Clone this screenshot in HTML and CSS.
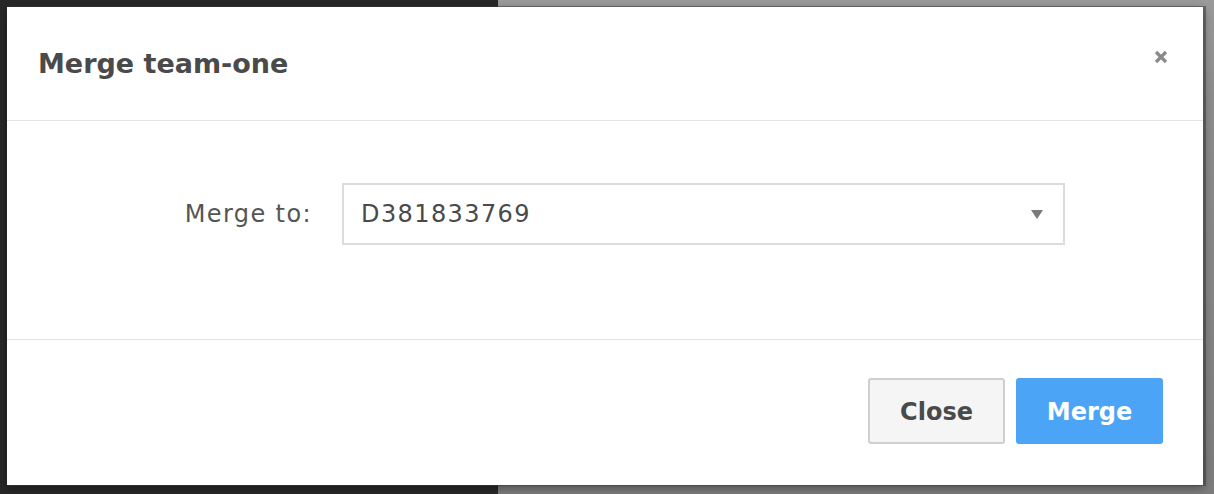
FILE: index.html
```html
<!DOCTYPE html>
<html>
<head>
<meta charset="utf-8">
<link rel="stylesheet" href="styles.css">
</head>
<body>
<div class="backdrop">
  <div class="side"></div>
  <div class="main"></div>
</div>
<div class="modal">
  <div class="modal-header">
    <h2 class="modal-title">Merge team-one</h2>
    <button class="close-x" aria-label="Close">
      <svg width="14" height="14" viewBox="0 0 14 14"><path d="M2 2 L12 12 M12 2 L2 12" stroke="#8a8a8a" stroke-width="3.2" stroke-linecap="butt"/></svg>
    </button>
  </div>
  <div class="modal-body">
    <label class="field-label">Merge to:</label>
    <div class="select">
      <span class="select-value">D381833769</span>
      <svg class="caret" width="12" height="9" viewBox="0 0 12 9"><path d="M0 0 H12 L6 9 Z" fill="#7a7a7a"/></svg>
    </div>
  </div>
  <div class="modal-footer">
    <button class="btn btn-default">Close</button>
    <button class="btn btn-primary">Merge</button>
  </div>
</div>
</body>
</html>
```

FILE: styles.css
```css
html, body {
  margin: 0;
  padding: 0;
  width: 1214px;
  height: 494px;
  overflow: hidden;
  font-family: "DejaVu Sans", Inter, sans-serif;
}
.backdrop {
  display: flex;
  width: 1214px;
  height: 494px;
}
.side {
  width: 498px;
  background: #282828;
}
.main {
  flex: 1;
  background: linear-gradient(180deg, #9a9a9a 0, #8c8c8c 20%, #858585 60%, #7c7c7c 100%);
}
.modal {
  position: absolute;
  left: 7px;
  top: 7px;
  width: 1196px;
  height: 478px;
  background: #fff;
  box-shadow: 2px 0 0 1px rgba(60,60,60,0.55), 0 3px 9px rgba(0,0,0,0.4);
  display: flex;
  flex-direction: column;
}
.modal-header {
  height: 113px;
  border-bottom: 1px solid #e3e3e3;
  display: flex;
  align-items: center;
  justify-content: space-between;
  padding: 0 35px 0 31px;
}
.modal-title {
  margin: 0;
  font-size: 27px;
  font-weight: 700;
  color: #4a4a4a;
}
.close-x {
  border: 0;
  background: none;
  padding: 0;
  width: 14px;
  height: 14px;
  margin-top: -14px;
  cursor: pointer;
  display: flex;
}
.modal-body {
  box-sizing: border-box;
  height: 219px;
  border-bottom: 1px solid #e3e3e3;
  display: flex;
  align-items: flex-start;
  padding-top: 62px;
}
.field-label {
  width: 305px;
  height: 62px;
  line-height: 62px;
  font-size: 24px;
  letter-spacing: 1.4px;
  color: #555;
  text-align: right;
}
.select {
  margin-left: 30px;
  width: 723px;
  height: 62px;
  box-sizing: border-box;
  border: 2px solid #dcdcdc;
  display: flex;
  align-items: center;
  justify-content: space-between;
  padding: 0 20px 0 17px;
}
.select-value {
  font-size: 24px;
  letter-spacing: 1.4px;
  color: #4a4a4a;
}
.caret {
  display: block;
}
.modal-footer {
  flex: 1;
  display: flex;
  justify-content: flex-end;
  align-items: flex-start;
  padding: 38px 40px 0 0;
  gap: 11px;
}
.btn {
  height: 66px;
  font-family: inherit;
  font-size: 24px;
  font-weight: 700;
  border-radius: 3px;
  cursor: pointer;
  padding-top: 2px;
}
.btn-default {
  width: 137px;
  background: #f5f5f5;
  color: #4a4a4a;
  border: 2px solid #cfcfcf;
}
.btn-primary {
  width: 147px;
  background: #4ba4f5;
  color: #fff;
  border: 0;
}
```
